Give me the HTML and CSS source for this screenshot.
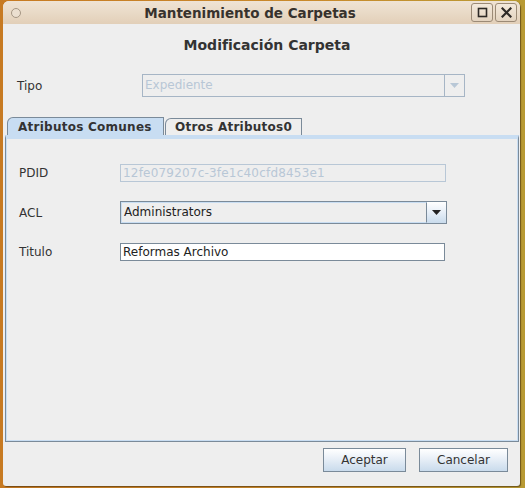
FILE: index.html
```html
<!DOCTYPE html>
<html lang="es">
<head>
<meta charset="utf-8">
<title>Mantenimiento de Carpetas</title>
<link rel="stylesheet" href="styles.css">
</head>
<body>
<div class="window">
  <div class="titlebar">
    <span class="tb-left"><span class="tb-circle"></span></span>
    <span class="tb-title">Mantenimiento de Carpetas</span>
    <span class="tb-buttons">
      <span class="tb-btn"><svg width="11" height="11" viewBox="0 0 11 11"><rect x="1.5" y="1.5" width="8" height="8" fill="none" stroke="#2e2a26" stroke-width="1.6"/></svg></span>
      <span class="tb-btn"><svg width="11" height="11" viewBox="0 0 11 11"><path d="M1.5 1.5 L9.5 9.5 M9.5 1.5 L1.5 9.5" stroke="#2e2a26" stroke-width="2.2" stroke-linecap="square"/></svg></span>
    </span>
  </div>
  <div class="content">
    <div class="heading">Modificación Carpeta</div>
    <div class="tipo-row">
      <span class="label">Tipo</span>
      <div class="combo combo-disabled">
        <span class="combo-text">Expediente</span>
        <span class="combo-arrow"><svg width="9" height="5" viewBox="0 0 9 5"><path d="M0 0 H9 L4.5 5 Z" fill="#b8c7d6"/></svg></span>
      </div>
    </div>
    <div class="tabs">
      <span class="tab tab-active">Atributos Comunes</span>
      <span class="tab">Otros Atributos0</span>
    </div>
    <div class="panel">
      <div class="form-row">
        <span class="flabel">PDID</span>
        <div class="field field-disabled">12fe079207c-3fe1c40cfd8453e1</div>
      </div>
      <div class="form-row">
        <span class="flabel">ACL</span>
        <div class="combo combo-acl">
          <span class="combo-text">Administrators</span>
          <span class="combo-btn"><svg width="9" height="5" viewBox="0 0 9 5"><path d="M0 0 H9 L4.5 5 Z" fill="#222"/></svg></span>
        </div>
      </div>
      <div class="form-row">
        <span class="flabel">Titulo</span>
        <div class="field field-white">Reformas Archivo</div>
      </div>
    </div>
    <div class="buttons">
      <span class="btn btn-ok">Aceptar</span>
      <span class="btn btn-cancel">Cancelar</span>
    </div>
  </div>
</div>
</body>
</html>
```
FILE: styles.css
```css
html, body {
  margin: 0;
  padding: 0;
}
body {
  width: 525px;
  height: 488px;
  overflow: hidden;
  background: linear-gradient(90deg, #c77a22 0%, #c98a2c 60%, #b89a34 100%);
  font-family: "DejaVu Sans", sans-serif;
  font-size: 12px;
  color: #333333;
}
.window {
  margin: 1px 0 0 3px;
  width: 517px;
  height: 485px;
  background: #eeeeee;
  border-radius: 6px 6px 3px 3px;
  box-shadow: 1px 1px 1px rgba(60, 40, 10, 0.6);
  display: flex;
  flex-direction: column;
  overflow: hidden;
}
.titlebar {
  height: 23px;
  flex: none;
  display: grid;
  grid-template-columns: 60px 1fr 80px;
  align-items: center;
  background: linear-gradient(180deg, #efe3d4 0%, #e9dac7 50%, #e2cfb8 100%);
}
.tb-left {
  padding-left: 8px;
  display: flex;
  align-items: center;
}
.tb-circle {
  width: 8px;
  height: 8px;
  border: 1px solid #a59684;
  border-radius: 50%;
  background: #ebdfd0;
}
.tb-title {
  text-align: center;
  font-weight: bold;
  font-size: 13.5px;
  color: #37322d;
  padding-right: 3px;
}
.tb-buttons {
  display: flex;
  justify-content: flex-end;
  gap: 2px;
  padding-right: 3px;
}
.tb-btn {
  width: 20px;
  height: 17px;
  border: 1px solid #9b8a76;
  border-radius: 3px;
  background: linear-gradient(180deg, #f3e9dc, #e3d3bf);
  display: flex;
  align-items: center;
  justify-content: center;
}
.content {
  flex: 1;
  display: flex;
  flex-direction: column;
  padding: 0 1px 0 2px;
}
.heading {
  margin-top: 12px;
  height: 18px;
  line-height: 18px;
  text-align: center;
  padding-left: 10px;
  font-weight: bold;
  font-size: 14px;
  color: #333333;
}
.tipo-row {
  margin-top: 20px;
  display: flex;
  align-items: center;
  height: 23px;
}
.label {
  width: 137px;
  padding-left: 12px;
  box-sizing: border-box;
}
.combo {
  display: flex;
  box-sizing: border-box;
  height: 23px;
}
.combo-disabled {
  width: 323px;
  border: 1px solid #a6b5c5;
}
.combo-text {
  flex: 1;
  line-height: 21px;
  padding-left: 2px;
}
.combo-disabled .combo-text {
  color: #b8c7d6;
  border-right: 1px solid #a6b5c5;
}
.combo-arrow {
  width: 19px;
  display: flex;
  align-items: center;
  justify-content: center;
}
.tabs {
  margin-top: 20px;
  padding-left: 2px;
  display: flex;
  align-items: flex-end;
  height: 18px;
}
.tab {
  height: 17px;
  line-height: 17px;
  box-sizing: border-box;
  border: 1px solid #7a8a99;
  border-bottom: none;
  font-weight: bold;
  color: #333333;
  background: #eeeeee;
  padding: 0 9px 0 9px;
  border-top-left-radius: 6px 6px;
  letter-spacing: 0.25px;
}
.tab-active {
  height: 18px;
  line-height: 18px;
  background: #c8ddf2;
  padding: 0 8px 0 10px;
  width: 157px;
  margin-right: 1px;
}
.panel {
  height: 307px;
  box-sizing: border-box;
  border: 1px solid #7a8a99;
  border-top: 3px solid #c8ddf2;
  box-shadow: inset 0 0 0 1px #c8ddf2;
  display: flex;
  flex-direction: column;
  gap: 19px;
  padding-top: 26px;
}
.form-row {
  display: flex;
  align-items: center;
}
.flabel {
  width: 114px;
  padding-left: 13px;
  box-sizing: border-box;
}
.field {
  box-sizing: border-box;
  height: 18px;
  line-height: 16px;
  padding-left: 2px;
  width: 326px;
}
.field-disabled {
  border: 1px solid #b8c7d6;
  color: #b8c7d6;
  letter-spacing: 0.2px;
}
.field-white {
  width: 325px;
  background: #ffffff;
  border: 1px solid #7a8a99;
  color: #222222;
}
.combo-acl {
  width: 327px;
  border: 1px solid #7a8a99;
  color: #222222;
}
.combo-acl .combo-text {
  border: 1px solid #c8ddf2;
  border-right: 1px solid #7a8a99;
  line-height: 19px;
}
.combo-btn {
  width: 19px;
  display: flex;
  align-items: center;
  justify-content: center;
  background: linear-gradient(180deg, #ffffff 0%, #e6eef7 50%, #c9dbec 100%);
}
.buttons {
  display: flex;
  justify-content: flex-end;
  gap: 13px;
  margin-top: 6px;
  padding-right: 11px;
}
.btn {
  box-sizing: border-box;
  height: 24px;
  line-height: 22px;
  text-align: center;
  border: 1px solid #7a8a99;
  background: linear-gradient(180deg, #ffffff 0%, #e8eff7 45%, #c9dbec 100%);
  color: #333333;
}
.btn-ok { width: 83px; }
.btn-cancel { width: 89px; }
```
